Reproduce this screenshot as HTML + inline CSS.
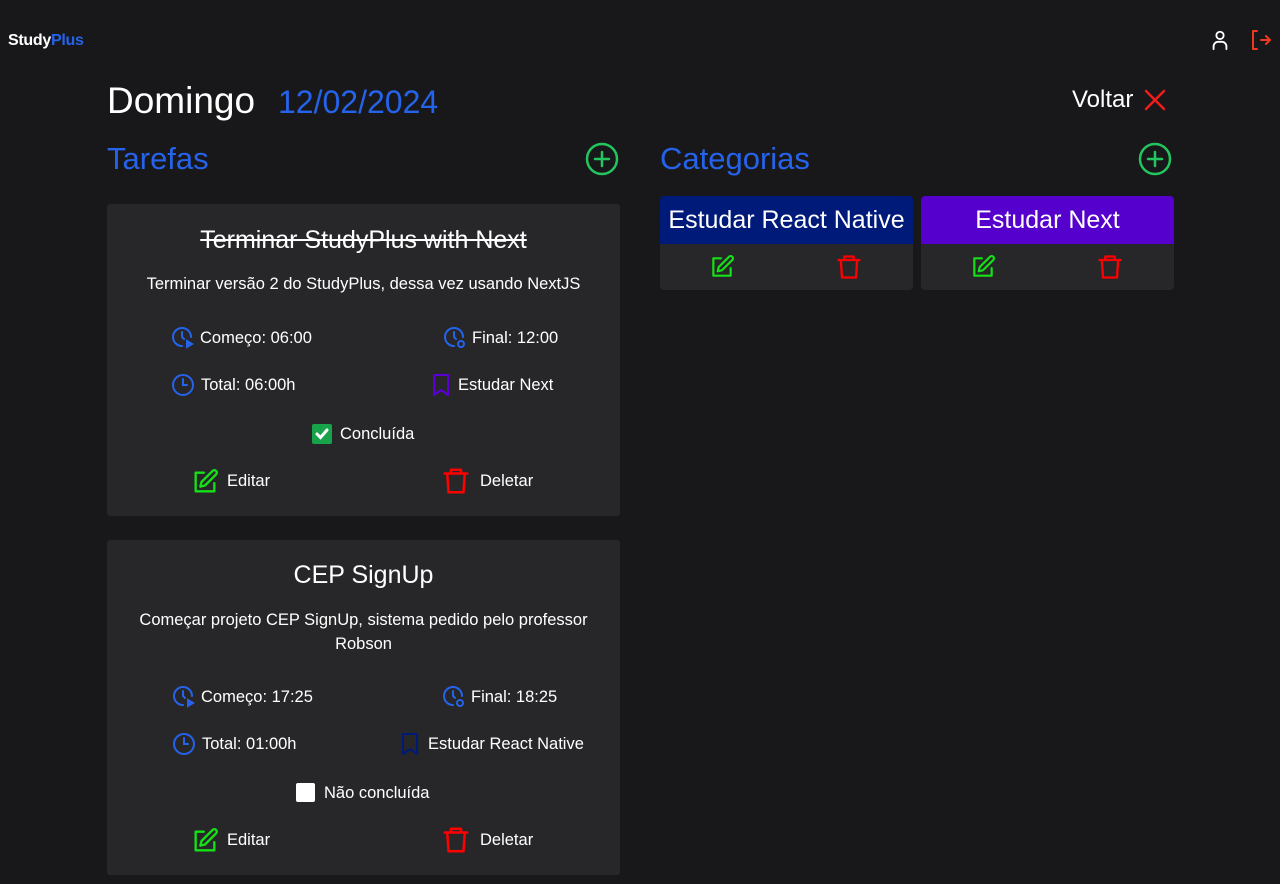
<!DOCTYPE html>
<html><head><meta charset="utf-8"><style>
*{margin:0;padding:0;box-sizing:border-box}
body{width:1280px;height:884px;background:#18181b;font-family:"Liberation Sans",sans-serif;color:#fff;position:relative;overflow:hidden}
.a{position:absolute}
.card{position:absolute;left:107px;width:513px;background:#27272a;border-radius:3px}
.t{position:absolute;font-size:16.5px;white-space:nowrap}
.c{text-align:center;left:0;width:100%}
svg{position:absolute}
.cat{position:absolute;top:196px;width:253px;height:94px;background:#27272a;border-radius:4px;overflow:hidden}
.cat .h{height:48px;font-size:25px;text-align:center;line-height:48px}
</style></head><body>
<div class="a" style="left:8px;top:32px;font-size:16px;font-weight:bold;letter-spacing:-0.3px">Study<span style="color:#2563eb">Plus</span></div>
<svg style="left:1209px;top:29px" width="22" height="22" viewBox="0 0 24 24" fill="none" stroke="#fff" stroke-width="2" stroke-linecap="round"><circle cx="12" cy="7" r="4"/><path d="M5 22v-3a5 5 0 0 1 5-5h4a5 5 0 0 1 5 5v3"/></svg>
<svg style="left:1249px;top:28px" width="24" height="24" viewBox="0 0 24 24" fill="none" stroke="#ef3a1f" stroke-width="2" stroke-linecap="round" stroke-linejoin="round"><path d="M8 3H4v18h4M12 12h9M17 8l4 4-4 4"/></svg>

<div class="a" style="left:107px;top:80px;font-size:37px">Domingo</div>
<div class="a" style="left:278px;top:84px;font-size:32px;color:#2563eb">12/02/2024</div>
<div class="a" style="left:1072px;top:86px;font-size:24px">Voltar</div>
<svg style="left:1143px;top:88px" width="24" height="24" viewBox="0 0 24 24" stroke="#ef1c1c" stroke-width="2.5" stroke-linecap="round"><path d="M3 3l18 18M21 3L3 21"/></svg>

<div class="a" style="left:107px;top:141px;font-size:31px;color:#2563eb">Tarefas</div>
<svg style="left:585px;top:142px" width="34" height="34" viewBox="0 0 34 34" fill="none" stroke="#22c55e" stroke-width="2.5" stroke-linecap="round"><circle cx="17" cy="17" r="15"/><path d="M17 10v14M10 17h14"/></svg>
<div class="a" style="left:660px;top:141px;font-size:31px;color:#2563eb">Categorias</div>
<svg style="left:1138px;top:142px" width="34" height="34" viewBox="0 0 34 34" fill="none" stroke="#22c55e" stroke-width="2.5" stroke-linecap="round"><circle cx="17" cy="17" r="15"/><path d="M17 10v14M10 17h14"/></svg>

<div class="cat" style="left:660px"><div class="h" style="background:#001a7a">Estudar React Native</div>
<svg style="left:49px;top:58px" width="26" height="26" viewBox="0 0 24 24" fill="none" stroke="#16e016" stroke-width="2" stroke-linecap="round" stroke-linejoin="round"><path d="M11 4H4v16h16v-7"/><path d="M18.5 2.5a2.1 2.1 0 0 1 3 3L12 15l-4 1 1-4z"/></svg>
<svg style="left:175px;top:57px" width="28" height="28" viewBox="0 0 24 24" fill="none" stroke="#f00" stroke-width="2" stroke-linecap="round" stroke-linejoin="round"><path d="M3 6h18M8 6V3h8v3M5 6l1 15h12l1-15"/></svg></div>
<div class="cat" style="left:921px"><div class="h" style="background:#5500cc">Estudar Next</div>
<svg style="left:49px;top:58px" width="26" height="26" viewBox="0 0 24 24" fill="none" stroke="#16e016" stroke-width="2" stroke-linecap="round" stroke-linejoin="round"><path d="M11 4H4v16h16v-7"/><path d="M18.5 2.5a2.1 2.1 0 0 1 3 3L12 15l-4 1 1-4z"/></svg>
<svg style="left:175px;top:57px" width="28" height="28" viewBox="0 0 24 24" fill="none" stroke="#f00" stroke-width="2" stroke-linecap="round" stroke-linejoin="round"><path d="M3 6h18M8 6V3h8v3M5 6l1 15h12l1-15"/></svg></div>

<!-- card 1 -->
<div class="card" style="top:204px;height:312px">
<div class="t c" style="top:22px;font-size:25px;text-decoration:line-through">Terminar StudyPlus with Next</div>
<div class="t c" style="top:71px;font-size:16.5px">Terminar versão 2 do StudyPlus, dessa vez usando NextJS</div>
<svg style="left:64px;top:122px" width="24" height="24" viewBox="0 0 24 24" fill="none" stroke="#2563eb" stroke-width="2" stroke-linecap="round"><path d="M20 11A9 9 0 1 0 11 20"/><path d="M11 6v5l2 2"/><path d="M16 15l5 3-5 3z" fill="#2563eb"/></svg>
<div class="t" style="left:93px;top:125px">Começo: 06:00</div>
<svg style="left:336px;top:122px" width="24" height="24" viewBox="0 0 24 24" fill="none" stroke="#2563eb" stroke-width="2" stroke-linecap="round"><path d="M20 11A9 9 0 1 0 11 20"/><path d="M11 6v5l2 2"/><circle cx="18" cy="18" r="3"/></svg>
<div class="t" style="left:365px;top:125px">Final: 12:00</div>
<svg style="left:64px;top:169px" width="24" height="24" viewBox="0 0 24 24" fill="none" stroke="#2563eb" stroke-width="2" stroke-linecap="round"><circle cx="12" cy="12" r="10"/><path d="M12 6v6h4"/></svg>
<div class="t" style="left:94px;top:172px">Total: 06:00h</div>
<svg style="left:322px;top:169px" width="24" height="24" viewBox="0 0 24 24" fill="none" stroke="#5a00d6" stroke-width="2" stroke-linejoin="round"><path d="M5 2h14v20l-7-5-7 5z"/></svg>
<div class="t" style="left:351px;top:172px">Estudar Next</div>
<div class="a" style="left:205px;top:220px;width:20px;height:20px;background:#16a34a;border-radius:2px"><svg width="20" height="20" viewBox="0 0 20 20" fill="none" stroke="#fff" stroke-width="3" stroke-linecap="round"><path d="M5 10l3.5 3.5L15 6"/></svg></div>
<div class="t" style="left:233px;top:221px">Concluída</div>
<svg style="left:84px;top:264px" width="28" height="28" viewBox="0 0 24 24" fill="none" stroke="#16e016" stroke-width="2" stroke-linecap="round" stroke-linejoin="round"><path d="M11 4H4v16h16v-7"/><path d="M18.5 2.5a2.1 2.1 0 0 1 3 3L12 15l-4 1 1-4z"/></svg>
<div class="t" style="left:120px;top:268px">Editar</div>
<svg style="left:334px;top:262px" width="30" height="30" viewBox="0 0 24 24" fill="none" stroke="#f00" stroke-width="2" stroke-linecap="round" stroke-linejoin="round"><path d="M3 6h18M8 6V3h8v3M5 6l1 15h12l1-15"/></svg>
<div class="t" style="left:373px;top:268px">Deletar</div>
</div>

<!-- card 2 -->
<div class="card" style="top:540px;height:335px">
<div class="t c" style="top:21px;font-size:25px">CEP SignUp</div>
<div class="t" style="top:68px;left:20px;width:473px;text-align:center;line-height:24px;white-space:normal">Começar projeto CEP SignUp, sistema pedido pelo professor Robson</div>
<svg style="left:65px;top:145px" width="24" height="24" viewBox="0 0 24 24" fill="none" stroke="#2563eb" stroke-width="2" stroke-linecap="round"><path d="M20 11A9 9 0 1 0 11 20"/><path d="M11 6v5l2 2"/><path d="M16 15l5 3-5 3z" fill="#2563eb"/></svg>
<div class="t" style="left:94px;top:148px">Começo: 17:25</div>
<svg style="left:335px;top:145px" width="24" height="24" viewBox="0 0 24 24" fill="none" stroke="#2563eb" stroke-width="2" stroke-linecap="round"><path d="M20 11A9 9 0 1 0 11 20"/><path d="M11 6v5l2 2"/><circle cx="18" cy="18" r="3"/></svg>
<div class="t" style="left:364px;top:148px">Final: 18:25</div>
<svg style="left:65px;top:192px" width="24" height="24" viewBox="0 0 24 24" fill="none" stroke="#2563eb" stroke-width="2" stroke-linecap="round"><circle cx="12" cy="12" r="10"/><path d="M12 6v6h4"/></svg>
<div class="t" style="left:95px;top:195px">Total: 01:00h</div>
<svg style="left:291px;top:192px" width="24" height="24" viewBox="0 0 24 24" fill="none" stroke="#001a7a" stroke-width="2" stroke-linejoin="round"><path d="M5 2h14v20l-7-5-7 5z"/></svg>
<div class="t" style="left:321px;top:195px">Estudar React Native</div>
<div class="a" style="left:189px;top:243px;width:19px;height:19px;background:#fff;border-radius:2px"></div>
<div class="t" style="left:217px;top:244px">Não concluída</div>
<svg style="left:84px;top:287px" width="28" height="28" viewBox="0 0 24 24" fill="none" stroke="#16e016" stroke-width="2" stroke-linecap="round" stroke-linejoin="round"><path d="M11 4H4v16h16v-7"/><path d="M18.5 2.5a2.1 2.1 0 0 1 3 3L12 15l-4 1 1-4z"/></svg>
<div class="t" style="left:120px;top:291px">Editar</div>
<svg style="left:334px;top:285px" width="30" height="30" viewBox="0 0 24 24" fill="none" stroke="#f00" stroke-width="2" stroke-linecap="round" stroke-linejoin="round"><path d="M3 6h18M8 6V3h8v3M5 6l1 15h12l1-15"/></svg>
<div class="t" style="left:373px;top:291px">Deletar</div>
</div>
</body></html>
